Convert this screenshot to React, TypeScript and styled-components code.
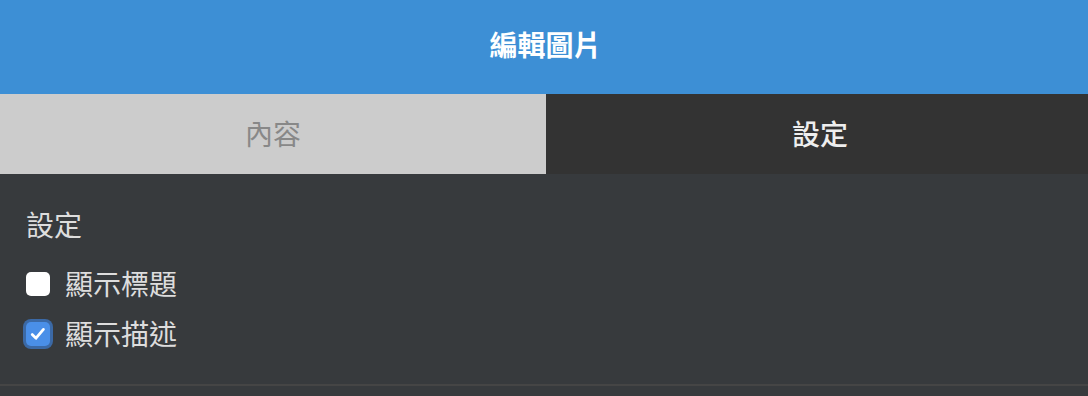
import React, { useState } from "react";
import styled, { createGlobalStyle } from "styled-components";

const Global = createGlobalStyle`
  html, body { margin: 0; padding: 0; background: #373a3d; }
  body { font-family: "Noto Sans CJK TC", "Noto Sans", sans-serif; }
  * { box-sizing: border-box; }
`;

const Page = styled.div`
  width: 1088px;
  height: 396px;
  display: flex;
  flex-direction: column;
  background: #373a3d;
  overflow: hidden;
`;

const Header = styled.header`
  height: 94px;
  flex: none;
  display: flex;
  align-items: center;
  justify-content: center;
  background: #3d8fd5;
  color: #ffffff;
  font-size: 28px;
  font-weight: 700;
  padding-bottom: 6px;
  padding-left: 3px;
`;

const Tabs = styled.nav`
  height: 80px;
  flex: none;
  display: grid;
  grid-template-columns: 546px 1fr;
`;

const Tab = styled.button<{ $active: boolean }>`
  border: none;
  margin: 0;
  padding: 0 0 2px ${(p) => (p.$active ? "6px" : "0")};
  font-family: inherit;
  font-size: 28px;
  font-weight: ${(p) => (p.$active ? 500 : 400)};
  display: flex;
  align-items: center;
  justify-content: center;
  background: ${(p) => (p.$active ? "#333333" : "#cccccc")};
  color: ${(p) => (p.$active ? "#eeeeee" : "#888888")};
  cursor: pointer;
`;

const Body = styled.section`
  padding: 30px 26px 30px;
  display: flex;
  flex-direction: column;
  border-bottom: 2px solid #454545;
`;

const SectionTitle = styled.div`
  height: 40px;
  line-height: 40px;
  font-size: 28px;
  font-weight: 400;
  color: #dddddd;
  margin-bottom: 20px;
`;

const Options = styled.div`
  display: flex;
  flex-direction: column;
  gap: 10px;
`;

const Row = styled.label`
  height: 40px;
  display: flex;
  align-items: center;
  gap: 15px;
  color: #dddddd;
  font-size: 28px;
  font-weight: 400;
  cursor: pointer;
`;

const Label = styled.span`
  line-height: 40px;
  padding-bottom: 3px;
`;

const Box = styled.span<{ $checked: boolean }>`
  width: 24px;
  height: 24px;
  flex: none;
  border-radius: 5px;
  display: flex;
  align-items: center;
  justify-content: center;
  background: ${(p) => (p.$checked ? "#4a8fe8" : "#ffffff")};
  box-shadow: ${(p) => (p.$checked ? "0 0 0 3px #3b69a6" : "none")};
`;

const HiddenInput = styled.input`
  display: none;
`;

function Check({ label, checked, onToggle }: { label: string; checked: boolean; onToggle: () => void }) {
  return (
    <Row>
      <HiddenInput type="checkbox" checked={checked} onChange={onToggle} />
      <Box $checked={checked}>
        {checked && (
          <svg width="20" height="20" viewBox="0 0 20 20">
            <path d="M4.2 10.6 L8 14.2 L15.4 5.4" fill="none" stroke="#ffffff" strokeWidth="2.8" strokeLinecap="round" strokeLinejoin="round" />
          </svg>
        )}
      </Box>
      <Label>{label}</Label>
    </Row>
  );
}

export default function App() {
  const [tab, setTab] = useState(1);
  const [showTitle, setShowTitle] = useState(false);
  const [showDesc, setShowDesc] = useState(true);
  return (
    <Page>
      <Global />
      <Header>編輯圖片</Header>
      <Tabs>
        <Tab $active={tab === 0} onClick={() => setTab(0)}>內容</Tab>
        <Tab $active={tab === 1} onClick={() => setTab(1)}>設定</Tab>
      </Tabs>
      <Body>
        <SectionTitle>設定</SectionTitle>
        <Options>
          <Check label="顯示標題" checked={showTitle} onToggle={() => setShowTitle(!showTitle)} />
          <Check label="顯示描述" checked={showDesc} onToggle={() => setShowDesc(!showDesc)} />
        </Options>
      </Body>
    </Page>
  );
}
